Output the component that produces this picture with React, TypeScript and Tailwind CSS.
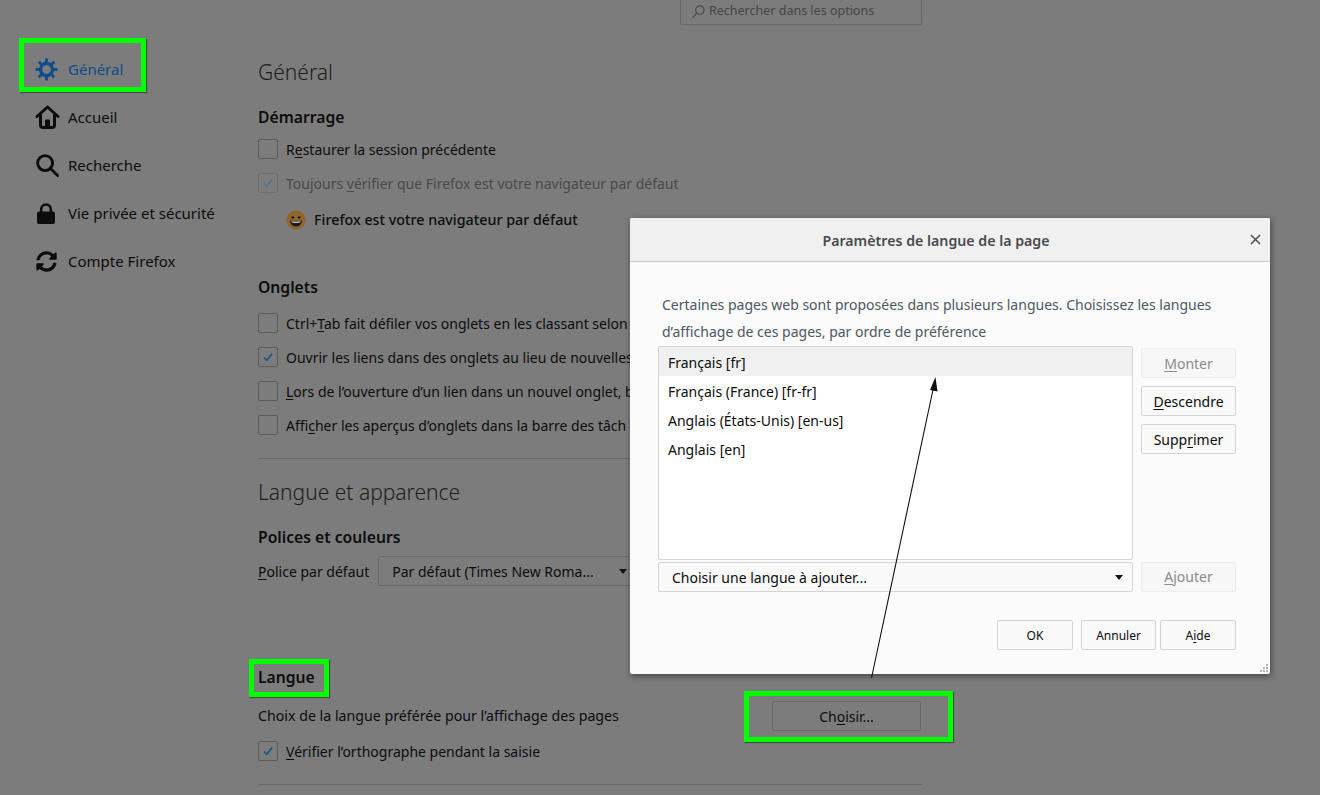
import React from "react";
import { FaSyncAlt } from "react-icons/fa";

const font = "font-['Noto_Sans',sans-serif]";

function U({ children }: { children: React.ReactNode }) {
  return <span className="underline underline-offset-2 decoration-1">{children}</span>;
}

function Gear({ className }: { className?: string }) {
  return (
    <svg viewBox="0 0 24 24" className={className} fill="none" stroke="currentColor">
      <circle cx="12" cy="12" r="6.3" strokeWidth="3.4" />
      <g strokeWidth="3">
        <path d="M12 .5v4.500M12 19v4.500M.5 12H5M19 12h4.500M3.900 3.900l3.200 3.200M16.900 16.900l3.200 3.200M3.900 20.100l3.200-3.200M16.900 7.100l3.200-3.200" />
      </g>
    </svg>
  );
}

function Home({ className }: { className?: string }) {
  return (
    <svg viewBox="0 0 25 24" className={className} fill="none" stroke="currentColor" strokeWidth="3" strokeLinejoin="round" strokeLinecap="round">
      <path d="M2 11.500 12.500 2 23 11.500" />
      <path d="M5.500 10v10a2.500 2.500 0 0 0 2.500 2.500h9a2.500 2.500 0 0 0 2.500-2.500V10" />
      <rect x="10" y="14.500" width="5" height="8" rx="1" fill="currentColor" stroke="none" />
    </svg>
  );
}

function Search({ className }: { className?: string }) {
  return (
    <svg viewBox="0 0 24 24" className={className} fill="none" stroke="currentColor" strokeWidth="3" strokeLinecap="round">
      <circle cx="9.500" cy="9.500" r="7.800" />
      <path d="m15.200 15.200 7.300 7.300" />
    </svg>
  );
}

function Lock({ className }: { className?: string }) {
  return (
    <svg viewBox="0 0 18 21" className={className} fill="currentColor">
      <path d="M4.200 9.500V6.300a4.800 4.800 0 0 1 9.600 0v3.200" fill="none" stroke="currentColor" strokeWidth="2.600" />
      <rect x="0" y="8.500" width="18" height="12.500" rx="2" />
    </svg>
  );
}

function Check({ faded }: { faded?: boolean }) {
  return (
    <svg viewBox="0 0 12 12" className={"h-3 w-3 " + (faded ? "text-[#5b7385]" : "text-[#0f5a86]")} fill="none" stroke="currentColor" strokeWidth="1.7">
      <path d="M2 6.500 4.800 9.300 10 2.800" />
    </svg>
  );
}

function CheckRow({ checked, faded, children, className }: { checked?: boolean; faded?: boolean; children: React.ReactNode; className?: string }) {
  return (
    <div className={"flex h-5 items-center gap-2 whitespace-nowrap " + className}>
      <span className={"flex h-5 w-5 shrink-0 items-center justify-center rounded-[2px] border " + (faded ? "border-[#6f6f6f]" : "border-[#5c5c5c]")}>
        {checked && <Check faded={faded} />}
      </span>
      <span className={faded ? "text-[#4a4a4c]" : ""}>{children}</span>
    </div>
  );
}

function Nav({ icon, label, active }: { icon: React.ReactNode; label: string; active?: boolean }) {
  return (
    <div className={"flex h-12 items-center text-[15px] " + (active ? "text-[#104b8a]" : "text-[#0c0c0d]")}>
      <span className="flex w-[33px] shrink-0 items-center">{icon}</span>
      <span>{label}</span>
    </div>
  );
}

function DBtn({ children, disabled, className }: { children: React.ReactNode; disabled?: boolean; className?: string }) {
  return (
    <div
      className={
        "flex h-[30px] items-center justify-center rounded-[2px] border " +
        (disabled ? "border-[#ececec] bg-[#f7f7f7] text-[#8a8a8c] " : "border-[#d4d4d6] bg-[#f9f9fa] text-[#0c0c0d] ") +
        className
      }
    >
      {children}
    </div>
  );
}

function Box({ className }: { className: string }) {
  return <div className={"absolute border-[5px] border-[#00ff00] shadow-[1px_1px_1px_rgba(0,0,0,0.4)] " + className} />;
}

const Caret = ({ className }: { className?: string }) => (
  <span className={"h-0 w-0 border-x-[4.5px] border-t-[5px] border-x-transparent " + className} />
);

const H2 = "h-[20px] text-[15.7px] leading-[20px] font-semibold";
const Row = "flex h-[29px] items-center pl-[9px] pt-[2px]";

export default function App() {
  return (
    <div className={"relative flex h-[795px] w-[1320px] overflow-hidden bg-[#7c7c7c] text-[14px] text-[#0c0c0d] " + font}>
      <aside className="w-[258px] shrink-0 pl-[35px] pt-[45px]">
        <Nav active label="Général" icon={<Gear className="h-[23px] w-[23px]" />} />
        <Nav label="Accueil" icon={<Home className="h-6 w-[25px]" />} />
        <Nav label="Recherche" icon={<Search className="ml-px h-[23px] w-[23px]" />} />
        <Nav label="Vie privée et sécurité" icon={<Lock className="ml-[2px] h-[21px] w-[18px]" />} />
        <Nav label="Compte Firefox" icon={<FaSyncAlt className="ml-px h-[23px] w-[21px]" />} />
      </aside>

      <main className="w-[664px] shrink-0">
        <div className="ml-auto flex h-[25px] w-[242px] items-center gap-[4px] rounded-b-[2px] border-x border-b border-[#686868] pb-[2px] pl-[11px] text-[12.5px] text-[#454545]">
          <svg viewBox="0 0 14 14" className="h-[13px] w-[13px] -scale-x-100" fill="none" stroke="currentColor" strokeWidth="1.2">
            <circle cx="5.500" cy="5.500" r="4.500" />
            <path d="m9 9 4.500 4.500" />
          </svg>
          Rechercher dans les options
        </div>

        <h1 className="mt-[32px] h-[30px] text-[21px] leading-[30px] font-light text-[#1c1c1e]">Général</h1>
        <h2 className={"mt-[20px] " + H2}>Démarrage</h2>
        <CheckRow className="mt-[12px]">
          R<U>e</U>staurer la session précédente
        </CheckRow>
        <CheckRow faded checked className="mt-[14px]">
          Toujours <U>v</U>érifier que Firefox est votre navigateur par défaut
        </CheckRow>
        <div className="ml-[28px] mt-[17px] flex h-5 items-center gap-2 text-[14.3px] font-medium">
          <svg viewBox="0 0 20 20" className="h-5 w-5">
            <circle cx="10" cy="10" r="9.500" fill="#8f6529" />
            <circle cx="6.800" cy="7.600" r="1.300" fill="#1c1c1c" />
            <circle cx="13.200" cy="7.600" r="1.300" fill="#1c1c1c" />
            <path d="M4 10.500c1.500 1 10.500 1 12 0-.5 4-3 6-6 6s-5.500-2-6-6Z" fill="#1c1c1c" />
            <path d="M5.500 11.300c2 .6 7 .6 9 0l-.4 1.300c-2 .5-6.200.5-8.200 0Z" fill="#d8d8d8" />
          </svg>
          Firefox est votre navigateur par défaut
        </div>

        <h2 className={"mt-[47px] " + H2}>Onglets</h2>
        <CheckRow className="mt-[16px]">
          Ctrl+<U>T</U>ab fait défiler vos onglets en les classant selon
        </CheckRow>
        <CheckRow checked className="mt-[14px]">
          Ouvrir les liens dans des onglets au lieu de nouvelles
        </CheckRow>
        <CheckRow className="mt-[14px]">
          <U>L</U>ors de l’ouverture d’un lien dans un nouvel onglet, b
        </CheckRow>
        <CheckRow className="mt-[14px]">
          Affi<U>c</U>her les aperçus d’onglets dans la barre des tâch
        </CheckRow>
        <hr className="mt-[23px] border-[#6a6a6a]" />

        <h1 className="mt-[18px] h-[30px] text-[21px] leading-[30px] font-light text-[#1c1c1e]">Langue et apparence</h1>
        <h2 className={"mt-[20px] " + H2}>Polices et couleurs</h2>
        <div className="mt-[9px] flex h-[30px] items-center gap-[9px]">
          <span>
            <U>P</U>olice par défaut
          </span>
          <div className="flex h-[30px] w-[258px] items-center justify-between rounded-l-[2px] border border-[#6a6a6a] pl-[13px] pr-[8px]">
            <span>Par défaut (Times New Roma...</span>
            <Caret className="border-t-[#111]" />
          </div>
        </div>

        <h2 className={"mt-[81px] " + H2}>Langue</h2>
        <div className="mt-[14px] flex h-[30px] items-center justify-between">
          <span className="text-[14.2px]">Choix de la langue préférée pour l’affichage des pages</span>
          <div className="mr-px flex h-[30px] w-[149px] items-center justify-center rounded-[2px] border border-[#6a6a6a]">
            Ch<U>o</U>isir...
          </div>
        </div>
        <CheckRow checked className="mt-[10px]">
          <U>V</U>érifier l’orthographe pendant la saisie
        </CheckRow>
        <hr className="mt-[23px] border-[#6a6a6a]" />
      </main>

      <Box className="left-[19px] top-[38px] h-[54px] w-[127px]" />
      <Box className="left-[249px] top-[659px] h-[38px] w-[80px]" />
      <Box className="left-[744px] top-[691px] h-[51px] w-[209px]" />

      <section className="absolute left-[630px] top-[218px] flex h-[456px] w-[640px] flex-col overflow-hidden rounded-[2px] bg-[#fbfbfb] shadow-[1px_2px_6px_rgba(0,0,0,0.45)]">
        <header className="relative flex h-[44px] shrink-0 items-center justify-center border-b border-[#c8c8c8] bg-[#f0f0f0] pr-[28px] pt-[2px] text-[14.2px] font-semibold text-[#4a4a4f]">
          Paramètres de langue de la page
          <svg viewBox="0 0 12 12" className="absolute right-[9px] top-[16px] h-[11px] w-[11px]" fill="none" stroke="#4a4a4f" strokeWidth="1.6">
            <path d="m1 1 10 10M11 1 1 11" />
          </svg>
        </header>
        <div className="flex flex-1 flex-col pl-[28px] pr-[34px] pt-[29px]">
          <p className="pl-[4px] leading-[27px] text-[#4b5763]">
            Certaines pages web sont proposées dans plusieurs langues. Choisissez les langues
            <br />
            d’affichage de ces pages, par ordre de préférence
          </p>
          <div className="mt-[1px] flex gap-2">
            <div className="h-[214px] w-[475px] rounded-[2px] border border-[#d4d4d6] bg-white">
              <div className={Row + " bg-[#f0f0f0]"}>Français [fr]</div>
              <div className={Row}>Français (France) [fr-fr]</div>
              <div className={Row}>Anglais (États-Unis) [en-us]</div>
              <div className={Row}>Anglais [en]</div>
            </div>
            <div className="mt-[2px] flex w-[95px] flex-col gap-2">
              <DBtn disabled>
                <U>M</U>onter
              </DBtn>
              <DBtn>
                <U>D</U>escendre
              </DBtn>
              <DBtn>
                Supp<U>r</U>imer
              </DBtn>
            </div>
          </div>
          <div className="mt-[2px] flex gap-2">
            <div className="flex h-[30px] w-[475px] items-center justify-between rounded-[2px] border border-[#d4d4d6] bg-[#f9f9fa] pl-[13px] pr-[9px]">
              <span>Choisir une langue à ajouter...</span>
              <Caret className="border-t-[#111]" />
            </div>
            <DBtn disabled className="w-[95px] pb-[2px]">
              <U>A</U>jouter
            </DBtn>
          </div>
          <div className="mt-[28px] flex justify-end">
            <DBtn className="mr-2 w-[76px] pt-[2px] text-[12px]">OK</DBtn>
            <DBtn className="mr-1 w-[75px] pt-[2px] text-[12px]">Annuler</DBtn>
            <DBtn className="w-[76px] pt-[2px] text-[12px]">
              A<U>i</U>de
            </DBtn>
          </div>
        </div>
        <svg viewBox="0 0 8 8" className="absolute bottom-[2px] right-[2px] h-2 w-2" fill="#b5b5b5">
          <rect x="6" y="0" width="2" height="2" />
          <rect x="3" y="3" width="2" height="2" />
          <rect x="6" y="3" width="2" height="2" />
          <rect x="0" y="6" width="2" height="2" />
          <rect x="3" y="6" width="2" height="2" />
          <rect x="6" y="6" width="2" height="2" />
        </svg>
      </section>

      <svg className="pointer-events-none absolute left-[860px] top-[370px] h-[315px] w-[90px]" viewBox="860 370 90 315">
        <path d="M871.500 678 934 385" stroke="#111" strokeWidth="1.1" fill="none" />
        <path d="M935.500 377 930 390l7.500 1.500Z" fill="#111" />
      </svg>
    </div>
  );
}
